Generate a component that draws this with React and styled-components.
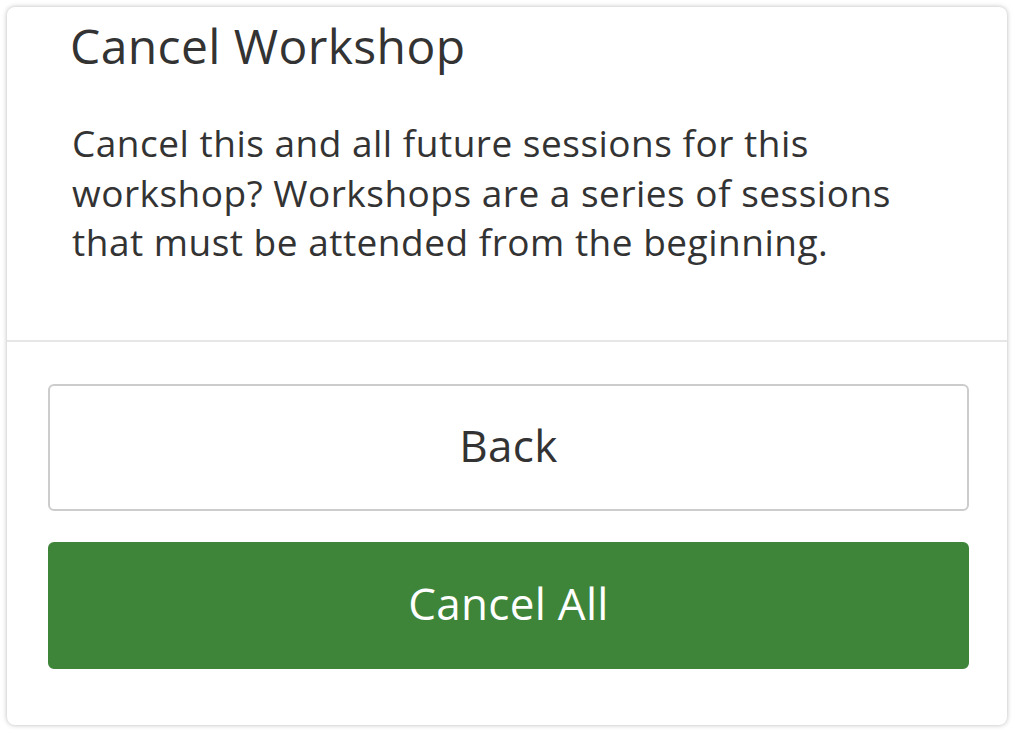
import React from "react";
import styled, { createGlobalStyle } from "styled-components";

const Global = createGlobalStyle`
  html, body { margin: 0; padding: 0; background: #ffffff; }
  body { font-family: "Open Sans", "Liberation Sans", sans-serif; color: #333333; }
  * { box-sizing: border-box; }
`;

const Page = styled.div`
  padding: 7px 8px 8px 7px;
  width: 1015px;
  height: 733px;
`;

const Card = styled.div`
  width: 1000px;
  height: 718px;
  background: #ffffff;
  border-radius: 8px;
  box-shadow: 0 0 5px rgba(0, 0, 0, 0.28);
  display: flex;
  flex-direction: column;
`;

const Header = styled.div`
  padding: 11px 40px 0 63px;
  height: 333px;
`;

const Title = styled.h1`
  margin: 0;
  font-size: 48px;
  line-height: 56px;
  letter-spacing: 0.4px;
  font-weight: 400;
  color: #333333;
`;

const Message = styled.p`
  margin: 44px 0 0 2px;
  font-size: 37px;
  line-height: 49.5px;
  letter-spacing: 0.5px;
  font-weight: 400;
  color: #333333;
  max-width: 860px;
`;

const Footer = styled.div`
  border-top: 2px solid #e6e6e6;
  padding: 42px 38px 0 41px;
  display: flex;
  flex-direction: column;
  gap: 31px;
`;

const Button = styled.button`
  height: 127px;
  width: 100%;
  padding: 0 0 5px;
  border-radius: 6px;
  font-family: inherit;
  font-size: 44px;
  letter-spacing: 0.3px;
  font-weight: 400;
  cursor: pointer;
  border: 2px solid ${(p) => (p.$primary ? "#3e853a" : "#cccccc")};
  background: ${(p) => (p.$primary ? "#3e853a" : "#ffffff")};
  color: ${(p) => (p.$primary ? "#ffffff" : "#333333")};
`;

export default function App() {
  return (
    <>
      <Global />
      <Page>
        <Card>
          <Header>
            <Title>Cancel Workshop</Title>
            <Message>
              Cancel this and all future sessions for this workshop? Workshops are a series of sessions that must be attended from the beginning.
            </Message>
          </Header>
          <Footer>
            <Button>Back</Button>
            <Button $primary>Cancel All</Button>
          </Footer>
        </Card>
      </Page>
    </>
  );
}
